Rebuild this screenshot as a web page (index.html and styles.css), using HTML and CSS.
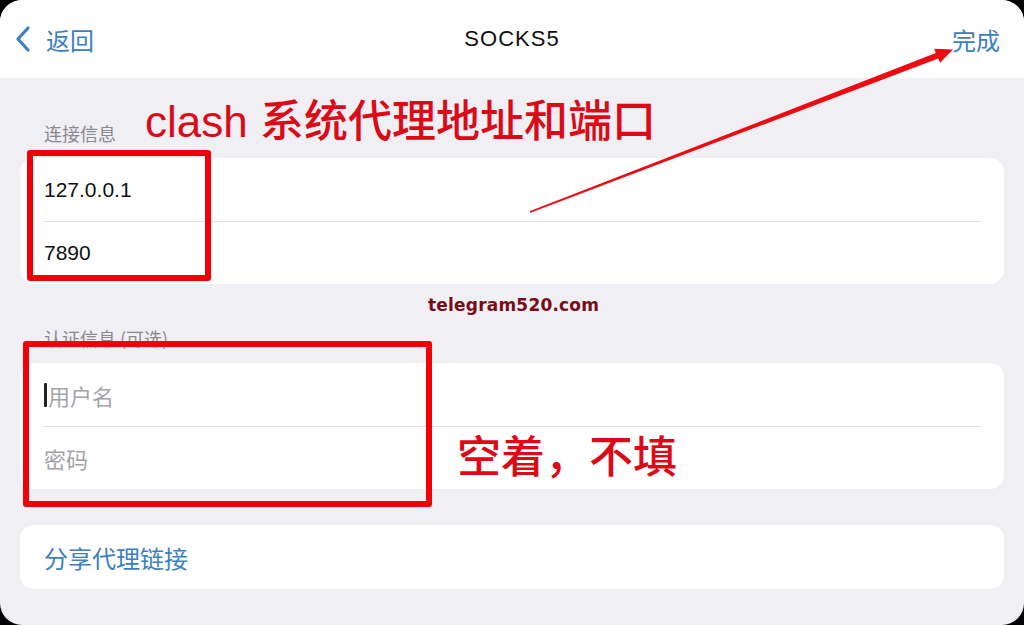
FILE: index.html
```html
<!DOCTYPE html>
<html lang="zh-CN">
<head>
    <meta charset="UTF-8">
    <meta name="viewport" content="width=device-width, initial-scale=1.0">
    <title>SOCKS5</title>
    <link rel="stylesheet" href="styles.css">
</head>
<body>
    <div class="screen">
        <header class="nav-bar">
            <a class="nav-back" href="#">
                <svg class="chevron" width="18" height="26" viewBox="0 0 18 26">
                    <path d="M14 2 L4 13 L14 24" fill="none" stroke="currentColor" stroke-width="3.2" stroke-linecap="round" stroke-linejoin="round"/>
                </svg>
                <span>返回</span>
            </a>
            <h1 class="nav-title">SOCKS5</h1>
            <a class="nav-done" href="#">完成</a>
        </header>

        <main class="content">
            <div class="section-label">连接信息</div>
            <div class="card">
                <div class="row">127.0.0.1</div>
                <div class="row">7890</div>
            </div>

            <div class="section-label">认证信息 (可选)</div>
            <div class="card">
                <div class="row placeholder"><span class="caret"></span>用户名</div>
                <div class="row placeholder">密码</div>
            </div>

            <div class="card card-single">
                <div class="row link">分享代理链接</div>
            </div>
        </main>

        <!-- 标注层 -->
        <div class="note-box note-box-server"></div>
        <div class="note-box note-box-auth"></div>
        <div class="note-text note-text-server">clash 系统代理地址和端口</div>
        <div class="note-text note-text-auth">空着，不填</div>
        <div class="watermark">telegram520.com</div>
        <svg class="note-arrow" width="1024" height="625" viewBox="0 0 1024 625">
            <polygon points="529.6,211.3 935.8,52.9 934.2,48.7 953,49.6 940.0,62.7 938.2,58.5 530.4,212.7" fill="#ee0a10"/>
        </svg>
    </div>
</body>
</html>
```

FILE: styles.css
```css
/* Reset */
* {
    margin: 0;
    padding: 0;
    box-sizing: border-box;
}

body {
    background: #000;
    font-family: "Liberation Sans", "Noto Sans CJK SC", sans-serif;
}

/* Tela com cantos arredondados */
.screen {
    position: relative;
    width: 1024px;
    height: 625px;
    background: #efeff4;
    border-radius: 22px;
    overflow: hidden;
}

/* Barra de navegação */
.nav-bar {
    height: 78px;
    background: #fff;
    display: flex;
    align-items: center;
    justify-content: space-between;
    padding: 0 24px 0 14px;
    position: relative;
}

.nav-back,
.nav-done {
    color: #3b80c0;
    text-decoration: none;
    font-size: 24px;
    font-family: "Noto Sans CJK SC", sans-serif;
    display: flex;
    align-items: center;
}

.nav-back .chevron {
    margin-right: 14px;
}

.nav-title {
    position: absolute;
    left: 0;
    right: 0;
    text-align: center;
    font-size: 22px;
    font-weight: normal;
    letter-spacing: 1px;
    color: #111;
    pointer-events: none;
}

/* Conteúdo */
.content {
    padding: 43px 20px 0;
}

.section-label {
    height: 24px;
    line-height: 24px;
    padding-left: 24px;
    font-size: 18px;
    color: #8a8a8e;
    font-family: "Noto Sans CJK SC", sans-serif;
    margin-bottom: 13px;
}

.card {
    background: #fff;
    border-radius: 14px;
    margin-bottom: 42px;
    padding-left: 24px;
}

.card-single {
    margin-top: -6px;
}

.row {
    height: 63px;
    display: flex;
    align-items: center;
    font-size: 21px;
    color: #111;
    margin-right: 24px;
}

.row + .row {
    border-top: 1px solid #e2e2e5;
}

.row.placeholder {
    color: #a4a4a8;
    font-size: 22px;
    font-family: "Noto Sans CJK SC", sans-serif;
}

.row.link {
    height: 64px;
    color: #3b80c0;
    font-size: 24px;
    font-family: "Noto Sans CJK SC", sans-serif;
}

.caret {
    display: inline-block;
    width: 3px;
    height: 24px;
    background: #222;
    border-radius: 1px;
    margin-right: 1px;
}

/* Anotações */
.note-box {
    position: absolute;
    border: 6px solid #f20008;
    border-radius: 3px;
}

.note-box-server {
    left: 27px;
    top: 150px;
    width: 184px;
    height: 131px;
}

.note-box-auth {
    left: 23px;
    top: 341px;
    width: 409px;
    height: 166px;
}

.note-text {
    position: absolute;
    color: #dc0a17;
    font-family: "Liberation Sans", "Noto Sans CJK SC", sans-serif;
    font-weight: 500;
    white-space: nowrap;
    line-height: 1;
}

.note-text-server {
    left: 145px;
    top: 100px;
    font-size: 44px;
}

.note-text-auth {
    left: 457px;
    top: 436px;
    font-size: 44px;
}

.watermark {
    position: absolute;
    left: 428px;
    top: 295px;
    font-family: "DejaVu Sans", sans-serif;
    font-weight: bold;
    font-size: 17px;
    letter-spacing: 0.2px;
    color: #7a0c18;
}

.note-arrow {
    position: absolute;
    left: 0;
    top: 0;
    pointer-events: none;
}
```
